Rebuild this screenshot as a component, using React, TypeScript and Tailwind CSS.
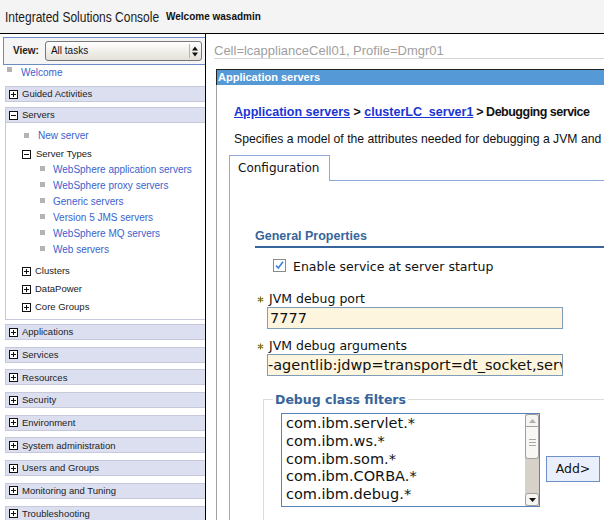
import React from "react";

const Plus = () => (
  <svg width="9" height="9" viewBox="0 0 9 9" className="shrink-0" shapeRendering="crispEdges">
    <rect x="0.5" y="0.5" width="8" height="8" fill="white" stroke="#111" />
    <path d="M2 4.5H7M4.5 2V7" stroke="#111" />
  </svg>
);

const Minus = () => (
  <svg width="9" height="9" viewBox="0 0 9 9" className="shrink-0" shapeRendering="crispEdges">
    <rect x="0.5" y="0.5" width="8" height="8" fill="white" stroke="#111" />
    <path d="M2 4.5H7" stroke="#111" />
  </svg>
);

const Bullet = ({ cls }: { cls: string }) => <span className={"block w-[5px] h-[5px] bg-[#b4b4b4] shrink-0 " + cls} />;

const Section = ({ label, open }: { label: string; open?: boolean }) => (
  <div className="ml-[5px] h-[16px] border border-r-0 border-[#c6c9dc] bg-[#dcdff0] flex items-center pl-[3px]">
    {open ? <Minus /> : <Plus />}
    <span className="ml-[4px] text-[9.5px] leading-none text-[#222] whitespace-nowrap">{label}</span>
  </div>
);

const subItems = [
  "WebSphere application servers",
  "WebSphere proxy servers",
  "Generic servers",
  "Version 5 JMS servers",
  "WebSphere MQ servers",
  "Web servers",
];

const lowerSections = [
  "Applications",
  "Services",
  "Resources",
  "Security",
  "Environment",
  "System administration",
  "Users and Groups",
  "Monitoring and Tuning",
  "Troubleshooting",
];

const filters = ["com.ibm.servlet.*", "com.ibm.ws.*", "com.ibm.som.*", "com.ibm.CORBA.*", "com.ibm.debug.*"];

const Star = () => (
  <svg width="7" height="7" viewBox="0 0 7 7" className="ml-[2px] shrink-0">
    <path d="M3.5 0.5V6.5M0.8 2L6.2 5M0.8 5L6.2 2" stroke="#7c6c1c" strokeWidth="1.1" />
  </svg>
);

export default function App() {
  return (
    <div className="w-[604px] h-[520px] overflow-hidden bg-white font-['Liberation_Sans',sans-serif] flex flex-col">
      {/* Header */}
      <div className="h-[34px] shrink-0 border-b border-black bg-[#f4f4f4] flex items-center">
        <div className="w-[166px] pl-[5px] shrink-0 overflow-visible">
          <span className="inline-block origin-left scale-x-[0.8] whitespace-nowrap text-[15px] leading-[18px] text-[#1c1c1c]">
            Integrated Solutions Console
          </span>
        </div>
        <span className="text-[10px] font-bold text-[#111] whitespace-nowrap">Welcome wasadmin</span>
      </div>

      <div className="flex flex-1 min-h-0">
        {/* Left nav */}
        <div className="w-[206px] shrink-0 border-r border-black flex flex-col overflow-hidden">
          <div className="mt-[3px] ml-[3px] h-[28px] shrink-0 border border-r-0 border-[#6b8cc4] bg-[#f5f5f5] flex items-center pl-[9px]">
            <span className="text-[10px] font-bold text-[#222] leading-none">View:</span>
            <div className="ml-[6px] w-[157px] h-[20px] border border-[#777] rounded-[3px] bg-linear-to-b from-white to-[#e4e0d8] flex items-center">
              <span className="flex-1 pl-[5px] text-[10px] text-[#111] leading-none">All tasks</span>
              <div className="w-[12px] h-[14px] border-l border-[#b8b4ac] flex items-center justify-center">
                <svg width="6" height="11" viewBox="0 0 6 11">
                  <polygon points="0,4.5 3,0.5 6,4.5" fill="#111" />
                  <polygon points="0,6.5 6,6.5 3,10.5" fill="#111" />
                </svg>
              </div>
            </div>
          </div>

          <div className="h-[16px] shrink-0 flex items-start pl-[7px]">
            <Bullet cls="mt-[2px]" />
            <span className="ml-[9px] text-[10px] leading-[16px] text-[#3b62cc]">Welcome</span>
          </div>

          <div className="mt-[5px] shrink-0">
            <Section label="Guided Activities" />
          </div>
          <div className="mt-[5px] shrink-0">
            <Section label="Servers" open />
          </div>

          <div className="ml-[5px] shrink-0 border-l border-b border-[#c6c9dc] pt-[5px] pb-[3px]">
            <div className="h-[16px] flex items-start pl-[18px]">
              <Bullet cls="mt-[5px]" />
              <span className="ml-[9px] text-[10px] leading-[16px] text-[#3b62cc]">New server</span>
            </div>
            <div className="mt-[2px] h-[16px] flex items-center pl-[16px]">
              <Minus />
              <span className="ml-[5px] text-[9.5px] leading-none text-[#222]">Server Types</span>
            </div>
            {subItems.map((s) => (
              <div key={s} className="h-[16px] flex items-start pl-[34px]">
                <Bullet cls="mt-[4px]" />
                <span className="ml-[8px] text-[10px] leading-[16px] text-[#3b62cc] whitespace-nowrap">{s}</span>
              </div>
            ))}
            <div className="mt-[4px]">
              {["Clusters", "DataPower", "Core Groups"].map((s) => (
                <div key={s} className="h-[18px] flex items-center pl-[16px]">
                  <Plus />
                  <span className="ml-[4px] text-[9.5px] leading-none text-[#222]">{s}</span>
                </div>
              ))}
            </div>
          </div>

          <div className="mt-[4px] flex flex-col gap-[6.7px] shrink-0">
            {lowerSections.map((s) => (
              <Section key={s} label={s} />
            ))}
          </div>
        </div>

        {/* Right content */}
        <div className="flex-1 overflow-hidden">
          <div className="w-[800px]">
            <div className="mt-[9px] ml-[8px] border-b border-[#d4d4d4] text-[13px] leading-[15px] text-[#a0a0a0] whitespace-nowrap">
              Cell=lcapplianceCell01, Profile=Dmgr01
            </div>

            <div className="mt-[10px] ml-[10px] h-[16px] border-t border-l border-[#222] bg-[#5699d7] pl-[1px] text-[11px] leading-[15px] font-bold text-white whitespace-nowrap">
              Application servers
            </div>

            <div className="ml-[10px] h-[460px] border-l border-[#a0a0a0] pt-[20px]">
              <div className="ml-[17px] text-[12.5px] leading-[15px] font-bold text-[#111] whitespace-nowrap">
                <a className="text-[#1a34d4] underline">Application servers</a>
                {" > "}
                <a className="text-[#1a34d4] underline">clusterLC_server1</a>
                <span className="tracking-[-0.5px]">{" > Debugging service"}</span>
              </div>
              <div className="mt-[12px] ml-[17px] text-[12.2px] leading-[15px] text-[#111] whitespace-nowrap">
                Specifies a model of the attributes needed for debugging a JVM and
              </div>

              <div className="mt-[8px] ml-[12px] font-['DejaVu_Sans',sans-serif]">
                <div className="flex h-[26px]">
                  <div className="w-[101px] border border-b-0 border-[#8eaadb] pl-[8px] text-[12px] leading-[24px] text-[#111]">
                    Configuration
                  </div>
                  <div className="flex-1 border-b border-[#8eaadb]" />
                </div>

                <div className="h-[360px] border-l border-[#8eaadb] pl-[25px] pt-[48px]">
                  <div className="border-b-2 border-[#37659b] pb-[2px] font-['Liberation_Sans',sans-serif] text-[12.5px] leading-[15px] font-bold text-[#37659b]">
                    General Properties
                  </div>

                  <div className="mt-[10px] ml-[18px] flex items-start">
                    <svg width="13" height="13" viewBox="0 0 13 13" className="mt-[1px] shrink-0">
                      <rect x="0.5" y="0.5" width="12" height="12" fill="white" stroke="#8a8a8a" />
                      <path d="M3 6.5L5.3 9L10 2.8" fill="none" stroke="#3b7fd8" strokeWidth="1.6" />
                    </svg>
                    <span className="ml-[7px] text-[12.5px] leading-[18px] text-[#111]">Enable service at server startup</span>
                  </div>

                  <div className="mt-[15px] h-[16px] flex items-center">
                    <Star />
                    <span className="ml-[5px] text-[12.5px] leading-[16px] text-[#111]">JVM debug port</span>
                  </div>
                  <input
                    readOnly
                    value="7777"
                    className="block ml-[12px] w-[296px] h-[22px] border border-[#7f9db9] bg-[#fdf5de] pl-[2px] text-[14.5px] text-[#111] outline-none"
                  />

                  <div className="mt-[9px] h-[16px] flex items-center">
                    <Star />
                    <span className="ml-[5px] text-[12.5px] leading-[16px] text-[#111]">JVM debug arguments</span>
                  </div>
                  <input
                    readOnly
                    value="-agentlib:jdwp=transport=dt_socket,server=y,suspend=n,address=7777"
                    className="block ml-[12px] w-[296px] h-[22px] border border-[#7f9db9] bg-[#fdf5de] pl-[0px] text-[14.5px] text-[#111] outline-none"
                  />

                  <div className="mt-[23px] ml-[8px] border-t border-l border-[#dcdcdc] pl-[17px] h-[140px]">
                    <div className="-mt-[8px] -ml-[8px] w-fit bg-white px-[2px] text-[12.5px] leading-[15px] font-bold text-[#37659b]">
                      Debug class filters
                    </div>
                    <div className="mt-[6px] flex items-start">
                      <div className="w-[259px] h-[94px] border border-[#5a82b8] flex bg-white">
                        <div className="flex-1 pl-[4px] pt-[1px] text-[14.5px] leading-[17.75px] text-[#111] whitespace-nowrap overflow-hidden">
                          {filters.map((f) => (
                            <div key={f}>{f}</div>
                          ))}
                        </div>
                        <div className="w-[14px] flex flex-col bg-[#d6d2ca]">
                          <div className="h-[13px] border border-[#a0a0a0] rounded-t-[3px] bg-[#f6f5f1] flex items-center justify-center">
                            <svg width="7" height="4" viewBox="0 0 7 4">
                              <polygon points="0,4 3.5,0 7,4" fill="#b0b0b0" />
                            </svg>
                          </div>
                          <div className="h-[32px] border border-t-0 border-[#a0a0a0] rounded-b-[3px] bg-[#f8f7f4] flex flex-col items-center justify-center gap-[2px]">
                            <div className="w-[7px] h-px bg-[#a8a8a8]" />
                            <div className="w-[7px] h-px bg-[#a8a8a8]" />
                            <div className="w-[7px] h-px bg-[#a8a8a8]" />
                          </div>
                          <div className="flex-1" />
                          <div className="h-[13px] border border-[#a0a0a0] rounded-[3px] bg-[#f6f5f1] flex items-center justify-center">
                            <svg width="7" height="4" viewBox="0 0 7 4">
                              <polygon points="0,0 7,0 3.5,4" fill="#111" />
                            </svg>
                          </div>
                        </div>
                      </div>
                      <div className="ml-[6px] mt-[43px] w-[54px] h-[26px] border border-[#6d8fca] bg-[#e9f0fc] flex items-center justify-center text-[12.5px] text-[#111]">
                        Add&gt;
                      </div>
                    </div>
                  </div>
                </div>
              </div>
            </div>
          </div>
        </div>
      </div>
    </div>
  );
}
